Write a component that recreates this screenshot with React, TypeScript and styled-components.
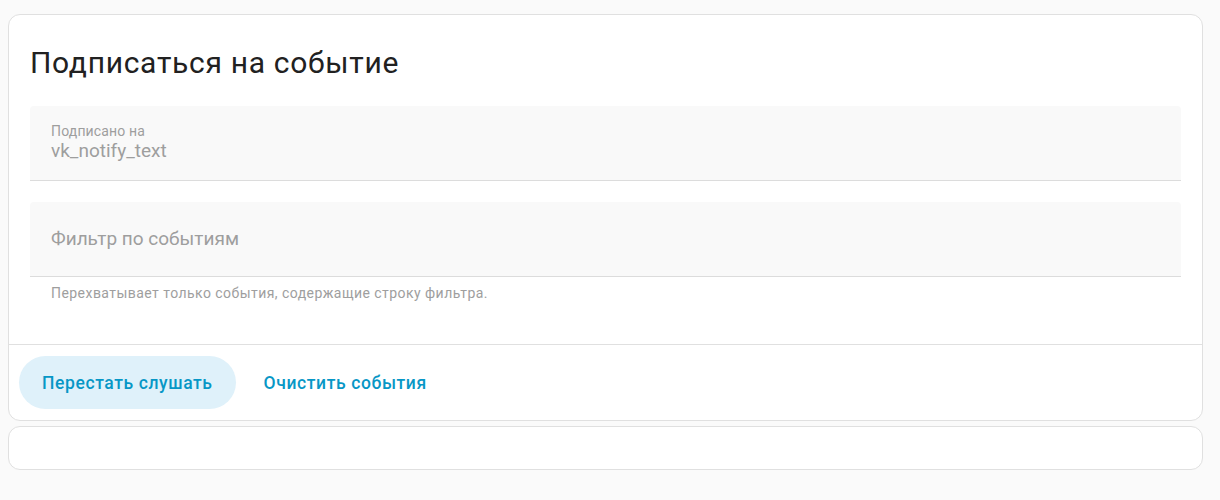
import { createGlobalStyle, styled } from "styled-components";

const GlobalStyle = createGlobalStyle`
  html, body {
    margin: 0;
    padding: 0;
    background: #fafafa;
    font-family: Roboto, "Liberation Sans", sans-serif;
  }
`;

const Page = styled.div`
  min-height: 500px;
  box-sizing: border-box;
  padding: 14px 17px 0 8px;
  display: flex;
  flex-flow: column;
  gap: 5px;
`;

const Card = styled.div<{ $height?: number }>`
  background: #fff;
  border: 1px solid #e0e0e0;
  border-radius: 12px;
  box-sizing: border-box;
  ${({ $height }) => ($height ? `height: ${$height}px;` : "")}
`;

const Title = styled.h1`
  margin: 0;
  padding: 28px 21px 0;
  font-size: 30px;
  line-height: 40px;
  letter-spacing: 0.7px;
  font-weight: 400;
  color: #212121;
`;

const Content = styled.div`
  padding: 23px 21px 43px;
  display: flex;
  flex-flow: column;
  gap: 21px;
`;

const Field = styled.div<{ $centered?: boolean }>`
  height: 75px;
  box-sizing: border-box;
  background: #f9f9f9;
  border-bottom: 1px solid #dcdcdc;
  border-radius: 4px 4px 0 0;
  padding: ${({ $centered }) => ($centered ? "0 21px" : "17px 21px 0")};
  display: flex;
  flex-flow: column;
  justify-content: ${({ $centered }) => ($centered ? "center" : "flex-start")};
`;

const FloatLabel = styled.span`
  font-size: 14px;
  line-height: 16px;
  letter-spacing: 0.15px;
  color: #9e9e9e;
`;

const Value = styled.span`
  font-size: 19px;
  line-height: 24px;
  color: #9e9e9e;
`;

const Placeholder = styled.span`
  font-size: 19px;
  line-height: 24px;
  color: #9e9e9e;
`;

const Group = styled.div`
  display: flex;
  flex-flow: column;
`;

const Helper = styled.span`
  padding: 8px 21px 0;
  font-size: 14px;
  line-height: 16px;
  letter-spacing: 0.45px;
  color: #9e9e9e;
`;

const Actions = styled.div`
  border-top: 1px solid #e0e0e0;
  padding: 11px 10px 11px;
  display: flex;
  align-items: center;
  gap: 5px;
`;

const Button = styled.button<{ $tonal?: boolean }>`
  height: 53px;
  border: none;
  border-radius: 27px;
  padding: 0 23px;
  background: ${({ $tonal }) => ($tonal ? "#dff1fa" : "transparent")};
  color: #0797c6;
  font-family: Roboto, "Liberation Sans", sans-serif;
  font-size: 17.5px;
  letter-spacing: 0.6px;
  font-weight: 500;
  cursor: pointer;
`;

const App = () => {
  return (
    <>
      <GlobalStyle />
      <Page>
        <Card>
          <Title>Подписаться на событие</Title>
          <Content>
            <Field>
              <FloatLabel>Подписано на</FloatLabel>
              <Value>vk_notify_text</Value>
            </Field>
            <Group>
              <Field $centered>
                <Placeholder>Фильтр по событиям</Placeholder>
              </Field>
              <Helper>
                Перехватывает только события, содержащие строку фильтра.
              </Helper>
            </Group>
          </Content>
          <Actions>
            <Button $tonal>Перестать слушать</Button>
            <Button>Очистить события</Button>
          </Actions>
        </Card>
        <Card $height={44} />
      </Page>
    </>
  );
};

export default App;
